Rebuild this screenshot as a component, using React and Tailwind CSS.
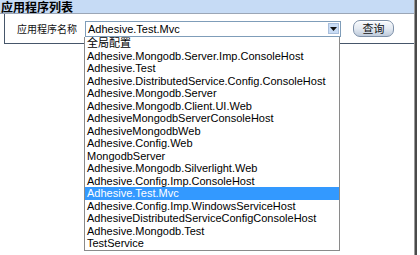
const apps = [
  '全局配置',
  'Adhesive.Mongodb.Server.Imp.ConsoleHost',
  'Adhesive.Test',
  'Adhesive.DistributedService.Config.ConsoleHost',
  'Adhesive.Mongodb.Server',
  'Adhesive.Mongodb.Client.UI.Web',
  'AdhesiveMongodbServerConsoleHost',
  'AdhesiveMongodbWeb',
  'Adhesive.Config.Web',
  'MongodbServer',
  'Adhesive.Mongodb.Silverlight.Web',
  'Adhesive.Config.Imp.ConsoleHost',
  'Adhesive.Test.Mvc',
  'Adhesive.Config.Imp.WindowsServiceHost',
  'AdhesiveDistributedServiceConfigConsoleHost',
  'Adhesive.Mongodb.Test',
  'TestService',
]

const selected = 'Adhesive.Test.Mvc'

export default function App() {
  return (
    <div className="relative w-[420px] h-[255px] bg-white overflow-hidden font-['Liberation_Sans','Noto_Sans_CJK_SC',sans-serif] text-black">
      <div className="w-[417px] h-full border-r-2 border-[#4a4a4a]">
        <div className="h-full border-r border-[#9a9a9a]">
          {/* title bar */}
          <div className="h-[14px] bg-[#c6dbf5] border-b border-[#9ba6b6] pl-[1px] flex items-center">
            <span className="text-[12px] leading-[12px] font-bold font-['Noto_Sans_CJK_SC',sans-serif]">
              应用程序列表
            </span>
          </div>

          {/* search row */}
          <div className="ml-[4px] h-[30px] border-l border-b border-[#46566a] flex items-center">
            <div className="pl-[12px] w-[80px] text-[10px] leading-[12px] font-['Noto_Sans_CJK_SC',sans-serif] text-[#111]">
              应用程序名称
            </div>
            <div className="w-[256px] h-[16px] border border-[#7f9db9] flex items-center justify-between">
              <span className="pl-[2px] text-[11px] leading-[14px]">{selected}</span>
              <span className="w-[11px] h-[11px] mr-[1px] bg-[#c9dcf5] border border-[#a9bfdc] flex items-center justify-center">
                <svg width="7" height="4" viewBox="0 0 7 4">
                  <path d="M0 0h7L3.5 4z" fill="#111" />
                </svg>
              </span>
            </div>
            <button className="ml-[12px] w-[41px] h-[17px] rounded-[7px] border border-[#7d90a8] bg-gradient-to-b from-[#f7f9fc] via-[#e4eaf2] to-[#bfcbdb] text-[11px] leading-[13px] font-['Noto_Sans_CJK_SC',sans-serif] text-[#111] shadow-[inset_0_1px_0_#fff]">
              查询
            </button>
          </div>
        </div>
      </div>

      {/* open dropdown list */}
      <div className="absolute left-[84px] top-[37px] w-[256px] bg-white border-x border-b border-[#8a8a8a]">
        {apps.map((name) => (
          <div
            key={name}
            className={`h-[12.5px] pl-[2px] text-[11px] leading-[12.5px] whitespace-nowrap ${
              name === selected ? 'bg-[#3399ff] text-white' : ''
            }`}
          >
            {name}
          </div>
        ))}
      </div>
    </div>
  )
}
